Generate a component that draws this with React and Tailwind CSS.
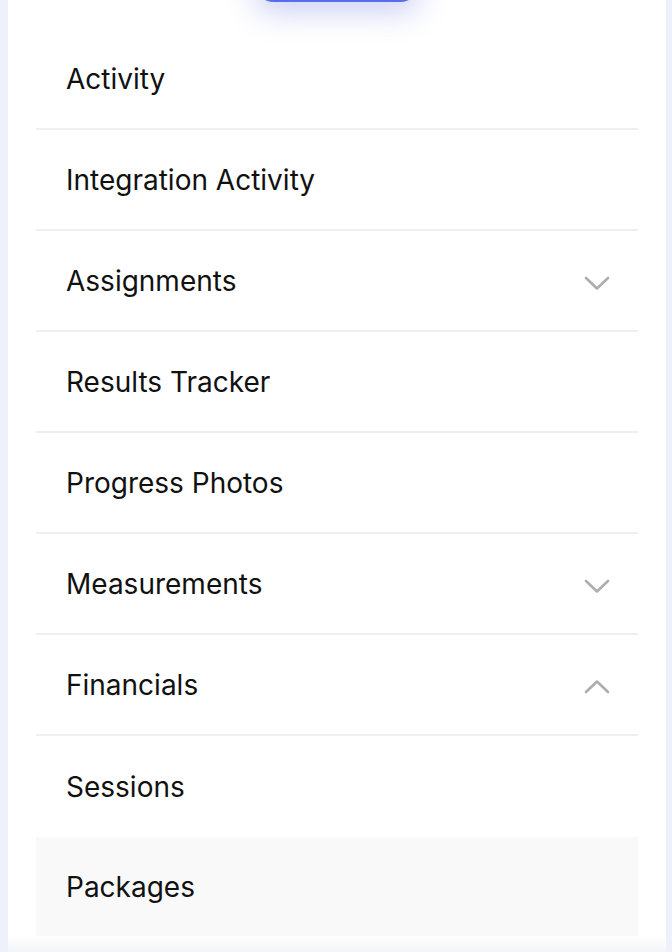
import React from "react";

const Chevron = ({ up }) => (
  <svg
    width="26"
    height="15"
    viewBox="0 0 26 15"
    fill="none"
    className={up ? "mt-[3px] shrink-0" : "mt-[6px] shrink-0"}
  >
    <path
      d={up ? "M2 13 L13 2.5 L24 13" : "M2 2 L13 12.5 L24 2"}
      stroke="#adadad"
      strokeWidth="2.6"
      strokeLinecap="round"
      strokeLinejoin="round"
    />
  </svg>
);

const items = [
  { label: "Activity" },
  { label: "Integration Activity" },
  { label: "Assignments", chevron: "down" },
  { label: "Results Tracker" },
  { label: "Progress Photos" },
  { label: "Measurements", chevron: "down" },
  { label: "Financials", chevron: "up" },
];

export default function App() {
  return (
    <div
      className="h-[952px] w-[672px] overflow-hidden bg-[#eef1fa] pl-[8px] pr-[6px]"
      style={{ fontFamily: "Inter, 'Noto Sans', sans-serif" }}
    >
      <div className="relative flex h-full flex-col bg-white">
        <div className="flex h-[29px] justify-center overflow-visible">
          <div className="-mt-[38px] h-[40px] w-[166px] rounded-full bg-[#5a6de9] shadow-[0_10px_30px_rgba(90,110,220,0.32)]" />
        </div>
        <div className="mx-[28px] flex flex-col">
          {items.map((it) => (
            <div
              key={it.label}
              className="flex h-[101px] items-center justify-between border-b-2 border-[#efefef] pl-[30px] pr-[28px]"
            >
              <span className="mt-[1px] text-[28px] leading-none text-[#111111]">
                {it.label}
              </span>
              {it.chevron && <Chevron up={it.chevron === "up"} />}
            </div>
          ))}
          <div className="flex h-[101px] items-center pl-[30px]">
            <span className="text-[28px] leading-none text-[#111111]">Sessions</span>
          </div>
          <div className="flex h-[99px] items-center bg-[#f9f9f9] pl-[30px]">
            <span className="mt-[1px] text-[28px] leading-none text-[#111111]">Packages</span>
          </div>
        </div>
        <div className="flex-1 bg-gradient-to-b from-white to-[#f4f5fa]" />
      </div>
    </div>
  );
}
